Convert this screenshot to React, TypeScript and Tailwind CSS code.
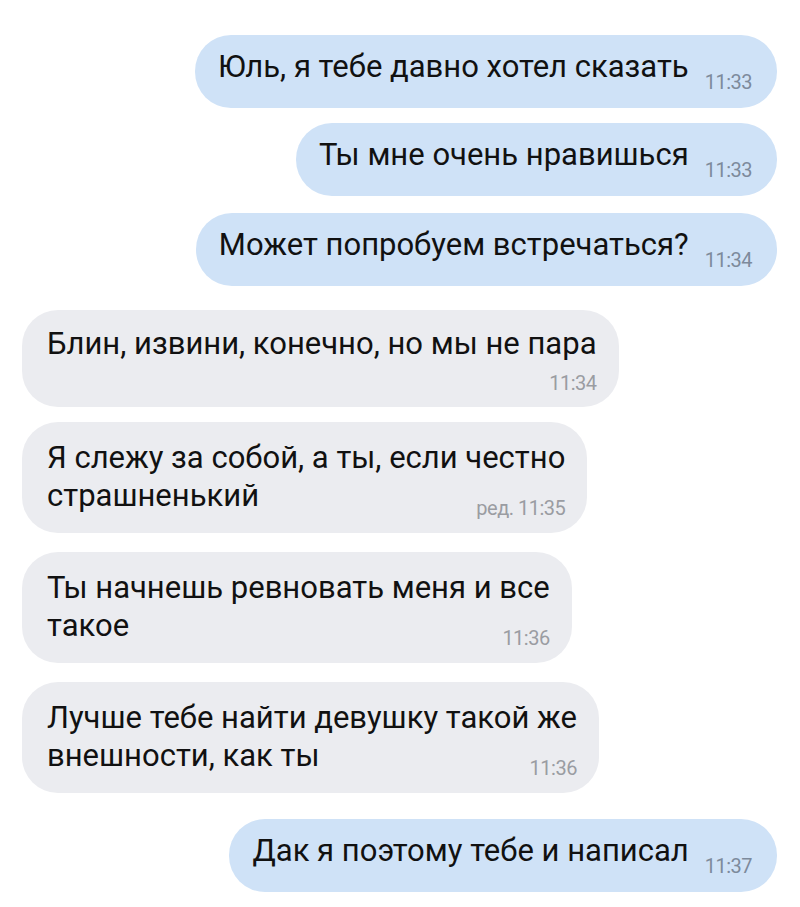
type Msg = {
  out: boolean;
  lines: string[];
  time: string;
  gap: string;
  timeRow?: boolean;
};

const messages: Msg[] = [
  { out: true, lines: ["Юль, я тебе давно хотел сказать"], time: "11:33", gap: "mt-[35px]" },
  { out: true, lines: ["Ты мне очень нравишься"], time: "11:33", gap: "mt-[15px]" },
  { out: true, lines: ["Может попробуем встречаться?"], time: "11:34", gap: "mt-[17px]" },
  { out: false, lines: ["Блин, извини, конечно, но мы не пара"], time: "11:34", gap: "mt-[24px]", timeRow: true },
  { out: false, lines: ["Я слежу за собой, а ты, если честно", "страшненький"], time: "ред. 11:35", gap: "mt-[15px]" },
  { out: false, lines: ["Ты начнешь ревновать меня и все", "такое"], time: "11:36", gap: "mt-[19px]" },
  { out: false, lines: ["Лучше тебе найти девушку такой же", "внешности, как ты"], time: "11:36", gap: "mt-[19px]" },
  { out: true, lines: ["Дак я поэтому тебе и написал"], time: "11:37", gap: "mt-[26px]" },
];

function Bubble({ m }: { m: Msg }) {
  if (m.out) {
    return (
      <div
        className={`${m.gap} self-end mr-[23px] flex items-end rounded-[36px] bg-[#cfe2f7] pl-[23px] pr-[25px] pt-[14px] pb-[23px]`}
      >
        <span className="text-[31px] leading-[36px] text-[#111]">{m.lines[0]}</span>
        <span className="ml-[16px] -mb-[9px] text-[20px] leading-[24px] tracking-[-0.5px] text-[#7d8a9c]">
          {m.time}
        </span>
      </div>
    );
  }
  return (
    <div
      className={`${m.gap} self-start ml-[22px] flex flex-col rounded-[36px] bg-[#ebecf0] pl-[25px] pr-[22px] ${
        m.timeRow ? "pt-[15px] pb-[12px]" : "pt-[17px] pb-[13px]"
      }`}
    >
      <p className="text-[31px] leading-[38px] text-[#111]">
        {m.lines.map((l, i) => (
          <span key={i}>
            {i > 0 && <br />}
            {l}
          </span>
        ))}
      </p>
      <div
        className={`flex justify-end text-[20px] leading-[24px] tracking-[-0.5px] text-[#9a9ca2] ${
          m.timeRow ? "mt-[8px]" : "-mt-[19px]"
        }`}
      >
        {m.time}
      </div>
    </div>
  );
}

export default function App() {
  return (
    <main
      className="flex min-h-[907px] w-full flex-col bg-white"
      style={{ fontFamily: "Roboto, 'Noto Sans', sans-serif" }}
    >
      {messages.map((m, i) => (
        <Bubble key={i} m={m} />
      ))}
    </main>
  );
}
